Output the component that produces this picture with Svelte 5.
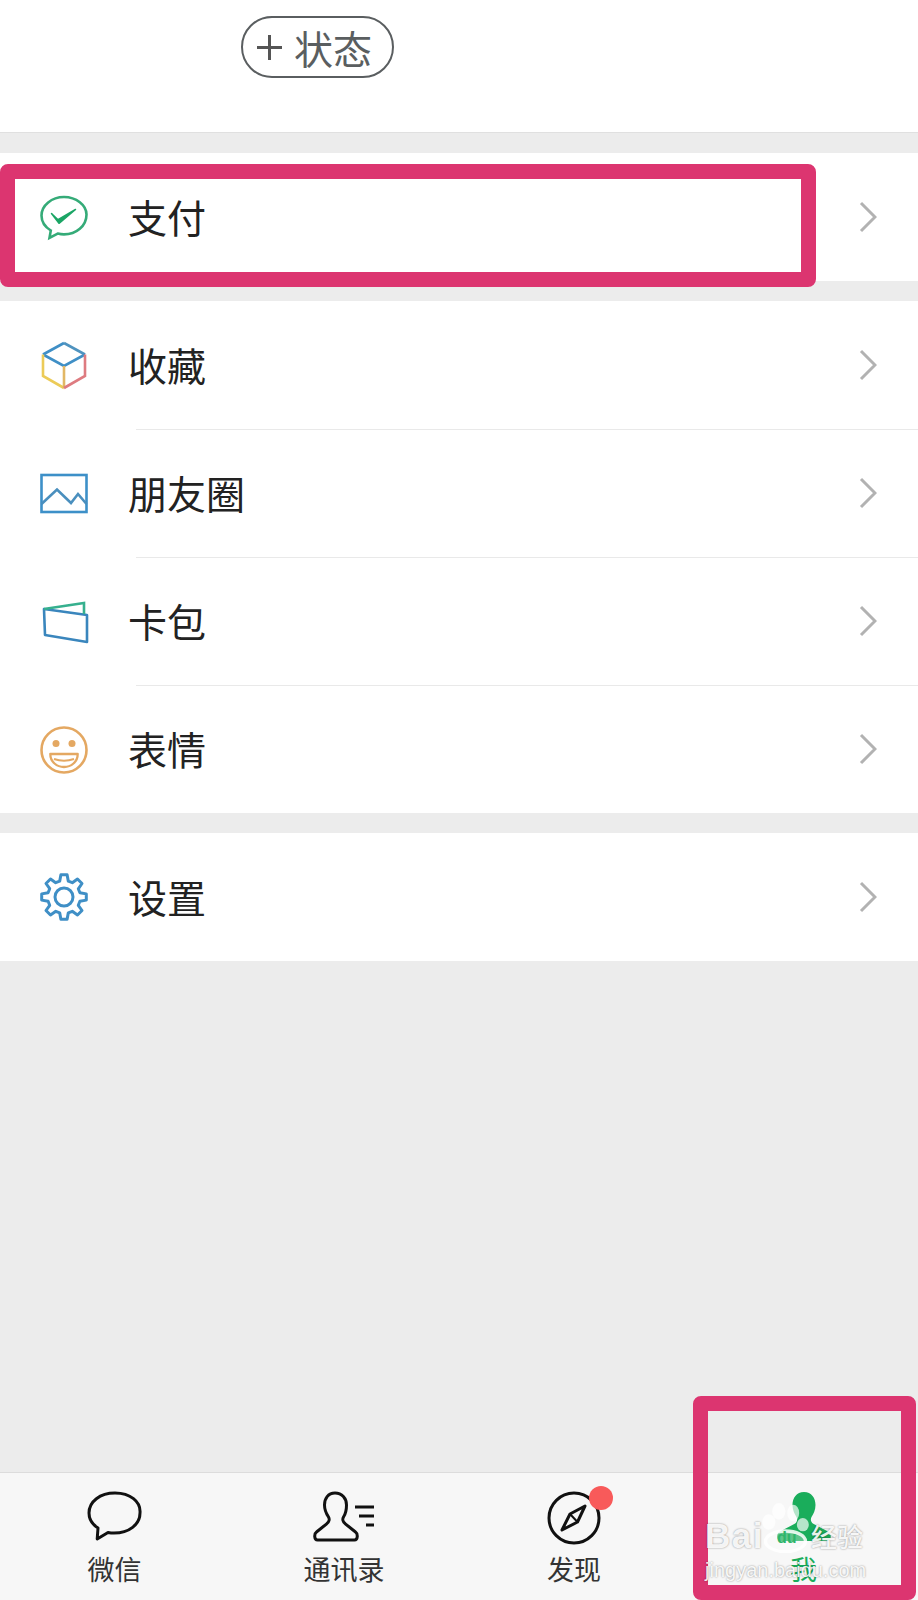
<script>
  const chevron = 'M2 2l14 14-14 14';
  const groups = [
    [{ id: 'pay', label: '支付' }],
    [
      { id: 'fav', label: '收藏' },
      { id: 'moments', label: '朋友圈' },
      { id: 'cards', label: '卡包' },
      { id: 'emoji', label: '表情' }
    ],
    [{ id: 'settings', label: '设置' }]
  ];

  // eight teeth, one pointing straight up
  function gearPath() {
    const at = (r, deg) => {
      const a = (deg * Math.PI) / 180;
      return `${(24 + r * Math.cos(a)).toFixed(1)} ${(24 + r * Math.sin(a)).toFixed(1)}`;
    };
    let d = '';
    for (let i = 0; i < 8; i++) {
      const c = -90 + i * 45;
      d += `${i ? 'L' : 'M'}${at(16.5, c - 15)}L${at(22.5, c - 8)}L${at(22.5, c + 8)}L${at(16.5, c + 15)}`;
    }
    return d + 'z';
  }
</script>

{#snippet icon(id)}
  <svg class="icon" width="48" height="48" viewBox="0 0 48 48" fill="none" stroke-width="2.6">
    {#if id === 'pay'}
      <path d="M24 4C11.800 4 1.500 12.200 1.500 22.500c0 6.400 3.900 11.700 9.300 15l-1.300 7.300 8.200-4.200c2 .5 4.100.8 6.300.8 12.200 0 22.500-8.300 22.500-19.900C46.500 12.200 36.200 4 24 4z" stroke="#35ab78"/>
      <path d="M11.500 20.500l6.500 6.200 17.500-10.200-16.500 13.800z" fill="#1ba565" stroke="#1ba565" stroke-width="1.500" stroke-linejoin="round"/>
    {:else if id === 'fav'}
      <path d="M24 2L3 13.500" stroke="#3f8fc6"/>
      <path d="M24 2l21 11.500" stroke="#4f93bf"/>
      <path d="M3 13.500l21 11.500 21-11.500" stroke="#3f8fc6"/>
      <path d="M3 13.500V35l21 12" stroke="#eccb58"/>
      <path d="M24 25v22" stroke="#e2b765"/>
      <path d="M45 13.500V35L24 47" stroke="#de7b80"/>
    {:else if id === 'moments'}
      <rect x="1.500" y="6" width="45" height="37" stroke="#3d90c8"/>
      <path d="M1.500 35L17 20.500 31 34l7-9 8.500 10" stroke="#4a8fbe"/>
    {:else if id === 'cards'}
      <path d="M4 12l43 6v27L5 38z" stroke="#3a86bd" stroke-linejoin="round"/>
      <path d="M4 12l40-6v11" stroke="#36b08e"/>
    {:else if id === 'emoji'}
      <circle cx="24" cy="25" r="22.500" stroke="#e4a862"/>
      <circle cx="16" cy="18.500" r="3.500" fill="#e4a862"/>
      <circle cx="32" cy="18.500" r="3.500" fill="#e4a862"/>
      <path d="M10.300 29h27.400c0 8-6.700 13-13.700 13s-13.700-5-13.700-13z" stroke="#e4a862" stroke-width="2.300" stroke-linejoin="round"/>
      <path d="M14 34q10 3.500 20 0" stroke="#e4a862" stroke-width="2"/>
    {:else}
      <path d={gearPath()} stroke="#3f8fc6" stroke-width="3" stroke-linejoin="round"/>
      <circle cx="24" cy="24" r="9" stroke="#3f8fc6" stroke-width="3"/>
    {/if}
  </svg>
{/snippet}

<div class="page">
  <div class="head">
    <div class="status"><span class="plus"></span><span>状态</span></div>
  </div>

  {#each groups as group}
    <div class="group">
      {#each group as item}
        <div class="row">
          {@render icon(item.id)}
          <span class="label">{item.label}</span>
          <svg class="chev" width="18" height="32" viewBox="0 0 18 32" fill="none" stroke="#b2b2b2" stroke-width="3">
            <path d={chevron} />
          </svg>
        </div>
      {/each}
    </div>
  {/each}

  <div class="fill"></div>

  <nav class="tabs">
    <div class="tab">
      <svg width="56" height="52" viewBox="0 0 56 52" fill="none" stroke="#111" stroke-width="3">
        <path d="M28 2C13 2 2 10.500 2 22c0 6.500 3.500 11.500 9 15l-.8 11 10.800-6.500c2 .4 4 .6 6 .6 15 0 26-8.600 26-20.100C54 10.500 43 2 28 2z" stroke-linejoin="round"/>
      </svg>
      <span>微信</span>
    </div>
    <div class="tab">
      <svg width="62" height="52" viewBox="0 0 62 52" fill="none" stroke="#111" stroke-width="3">
        <path d="M22 2c-7 0-10.500 5.500-10.500 12 0 5 2 9 4 12 1.200 2 .8 5-1.800 6.800L3.500 41c-2.500 1.800-2.500 8 1 8h37c3.500 0 3.500-6.200 1-8l-10.200-8.200c-2.600-1.800-3-4.800-1.800-6.800 2-3 3-7 3-12C33.500 7.500 29 2 22 2z" stroke-linejoin="round"/>
        <path d="M42 16h19M46 25h15M53 34h8" />
      </svg>
      <span>通讯录</span>
    </div>
    <div class="tab">
      <div class="compass">
        <svg width="54" height="54" viewBox="0 0 54 54" fill="none" stroke="#111" stroke-width="3">
          <circle cx="27" cy="27" r="25"/>
          <path d="M38 15L30.500 31 15 39l8-16z" stroke-linejoin="round"/>
          <path d="M23 23l7.500 8" stroke-width="2"/>
        </svg>
        <i class="dot"></i>
      </div>
      <span>发现</span>
    </div>
    <div class="tab on">
      <svg width="62" height="52" viewBox="0 0 62 52" fill="#1aad5b">
        <path d="M31 1c-7.500 0-11.500 6-11.500 13 0 5 2 9 4 12 1.200 2 .8 5-1.800 6.800L6 41c-2.500 1.800-2.500 9 1 9h48c3.500 0 3.500-7.200 1-9l-15.700-8.200c-2.600-1.800-3-4.800-1.800-6.800 2-3 4-7 4-12C42.500 7 38.500 1 31 1z"/>
      </svg>
      <span>我</span>
    </div>
  </nav>

  <div class="mark first"></div>
  <div class="mark second"></div>

  <div class="watermark">
    <svg class="paw" width="47" height="50" viewBox="0 0 140 150">
      <g fill="rgba(255,255,255,.68)">
        <ellipse cx="20" cy="57" rx="20" ry="23"/>
        <ellipse cx="50" cy="25" rx="20" ry="25"/>
        <ellipse cx="93" cy="30" rx="18" ry="25"/>
        <ellipse cx="122" cy="65" rx="18" ry="20"/>
      </g>
      <ellipse cx="70" cy="115" rx="60" ry="31" fill="rgba(255,255,255,.3)" stroke="rgba(255,255,255,.85)" stroke-width="10"/>
    </svg>
    <span class="du">du</span>
    <div class="wm-top"><span class="bai">Bai</span><span class="gap"></span><span class="jy">经验</span></div>
    <div class="wm-url">jingyan.baidu.com</div>
  </div>
</div>

<style>
  :global(body) {
    margin: 0;
    background: #ececec;
  }

  .page {
    position: relative;
    width: 918px;
    height: 1600px;
    overflow: hidden;
    display: flex;
    flex-direction: column;
    background: #ececec;
    font-family: "Noto Sans CJK SC", "Noto Sans", sans-serif;
    color: #222;
  }

  .head {
    height: 133px;
    flex-shrink: 0;
    box-sizing: border-box;
    padding: 16px 0 0 241px;
    background: #fff;
    border-bottom: 1px solid #e0e0e0;
  }

  .status {
    box-sizing: border-box;
    width: 153px;
    height: 62px;
    border: 2.500px solid #5a5e60;
    border-radius: 31px;
    display: flex;
    align-items: center;
    gap: 12px;
    padding-left: 14px;
    font-size: 39px;
    line-height: 1;
    color: #5a5e60;
  }

  .plus {
    position: relative;
    width: 25px;
    height: 25px;
    flex-shrink: 0;
    background:
      linear-gradient(#555, #555) center / 100% 3px no-repeat,
      linear-gradient(#555, #555) center / 3px 100% no-repeat;
  }

  .group {
    margin-top: 20px;
    background: #fff;
  }

  .row {
    position: relative;
    height: 128px;
    display: flex;
    align-items: center;
    padding-left: 40px;
  }

  .row + .row::before {
    content: '';
    position: absolute;
    top: 0;
    left: 136px;
    right: 0;
    height: 1px;
    background: #e9e9e9;
  }

  .icon {
    flex-shrink: 0;
    overflow: visible;
  }

  .label {
    margin-left: 40px;
    margin-bottom: 2px;
    font-size: 39px;
    line-height: 1;
  }

  .chev {
    margin-left: auto;
    margin-right: 41px;
  }

  .fill {
    flex: 1;
  }

  .tabs {
    height: 128px;
    flex-shrink: 0;
    box-sizing: border-box;
    display: grid;
    grid-template-columns: 229px 230px 230px 229px;
    background: #f7f7f7;
    border-top: 1px solid #dcdcdc;
  }

  .tab {
    display: flex;
    flex-direction: column;
    align-items: center;
    padding-top: 18px;
    font-size: 27px;
    line-height: 34px;
    color: #333;
  }

  .tab svg {
    display: block;
    flex-shrink: 0;
  }

  .tab span {
    margin-top: 9px;
  }

  .tab.on {
    color: #1aad5b;
  }

  .compass {
    position: relative;
    height: 52px;
  }

  .dot {
    position: absolute;
    top: -5px;
    right: -12px;
    width: 24px;
    height: 24px;
    border-radius: 50%;
    background: #f85a5a;
  }

  .mark {
    position: absolute;
    box-sizing: border-box;
    border: 15px solid #dc3570;
    border-radius: 8px;
  }

  .first {
    left: 0;
    top: 164px;
    width: 816px;
    height: 123px;
  }

  .second {
    left: 693px;
    top: 1396px;
    width: 223px;
    height: 204px;
  }

  .watermark {
    position: absolute;
    left: 705px;
    top: 1503px;
    width: 165px;
    color: rgba(255, 255, 255, .92);
    text-shadow: 0 0 2px rgba(0, 0, 0, .45);
    font-family: "Liberation Sans", sans-serif;
  }

  .paw {
    position: absolute;
    left: 57px;
    top: 0;
  }

  .du {
    position: absolute;
    left: 72px;
    top: 28px;
    font-size: 16px;
    line-height: 14px;
    font-weight: 700;
    color: #2eb56a;
    text-shadow: none;
  }

  .wm-top {
    display: flex;
    align-items: center;
    margin-top: 16px;
    font-size: 35px;
    line-height: 34px;
    font-weight: 700;
  }

  .bai {
    letter-spacing: 1.500px;
  }

  .gap {
    width: 47px;
  }

  .jy {
    font-family: "Noto Sans CJK SC", sans-serif;
    font-size: 26px;
    font-weight: 500;
  }

  .wm-url {
    margin-top: 5px;
    font-size: 20px;
    line-height: 24px;
    white-space: nowrap;
  }
</style>
